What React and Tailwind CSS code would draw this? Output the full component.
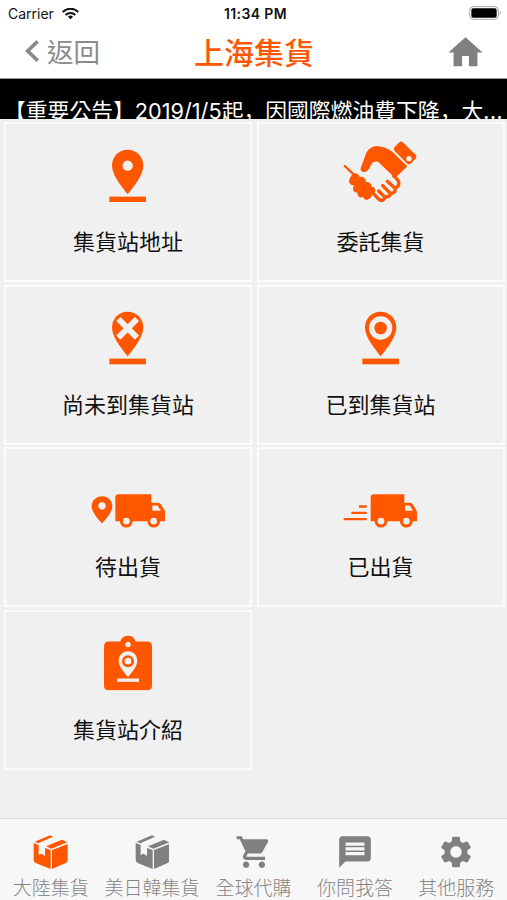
import { MdHome, MdMessage, MdSettings, MdShoppingCart } from "react-icons/md";

const ORANGE = "#ff5600";
const PAPER = "#f0f0f0";

function WifiIcon() {
  return (
    <svg viewBox="0 0 51 36" className="w-[17px] h-3 shrink-0" fill="none" stroke="#111" strokeWidth="6">
      <path d="M2 12C15 -1 36 -1 49 12" />
      <path d="M11 21C19 13 32 13 40 21" />
      <path d="M18 26C22 21.500 29 21.500 33 26L25.500 34Z" fill="#111" stroke="none" />
    </svg>
  );
}

function BatteryIcon() {
  return (
    <svg viewBox="0 0 96 42" className="w-8 h-3.5" fill="none">
      <rect x="2" y="2" width="86" height="38" rx="10" stroke="#aaa" strokeWidth="3" />
      <rect x="7" y="7" width="76" height="28" rx="5" fill="#000" />
      <path d="M92 15C96 17 96 25 92 27Z" fill="#999" />
    </svg>
  );
}

function PinIcon({ kind }) {
  return (
    <svg viewBox="0 0 112 160" className="w-[37.300px] h-[53.300px]">
      <path d="M56 2C29 2 9 23 9 49C9 76 31 105 56 136C81 105 103 76 103 49C103 23 83 2 56 2Z" fill={ORANGE} />
      <rect x="1" y="143" width="110" height="17" fill={ORANGE} />
      {kind === "dot" && <circle cx="56" cy="50" r="15.500" fill={PAPER} />}
      {kind === "cross" && <path d="M28 24L84 80M84 24L28 80" stroke={PAPER} strokeWidth="18" />}
      {kind === "ring" && (
        <>
          <circle cx="56" cy="51" r="35" fill={PAPER} />
          <circle cx="56" cy="51" r="19" fill={ORANGE} />
        </>
      )}
    </svg>
  );
}

function HandshakeIcon() {
  return (
    <svg viewBox="100 30 225 190" className="w-[75px] h-[63.300px] translate-y-px" fill={ORANGE}>
      <path d="M105 108L136 137" stroke={ORANGE} strokeWidth="7" strokeLinecap="round" />
      <path d="M270 36Q276 33 281 38L318 74Q323 80 319 85L305 100Q299 106 293 101L255 63Q250 58 254 52Z" />
      <path d="M153 115L170 68Q180 50 200 48Q225 49 248 65L293 109L259 142L246 134L206 96Q196 92 187 100L179 115Q173 127 162 126Q151 124 153 115Z" />
      <path
        d="M129 135Q138 128 146 137L149 145Q158 139 165 148L168 159Q178 155 183 165L184 173Q193 171 195 180Q196 187 190 191L178 205Q169 211 164 204L161 198Q150 205 146 194L144 185Q133 188 132 177L134 163Q121 165 120 154Q120 146 129 135Z"
        stroke={ORANGE}
        strokeWidth="4"
      />
      <path
        d="M188 188L207 207Q216 216 224 207L228 200Q238 203 244 190Q258 190 257 174Q270 168 267 155Q265 149 252 138M207 183L226 202M219 167L242 190M233 154L256 175"
        fill="none"
        stroke={ORANGE}
        strokeWidth="10"
        strokeLinecap="round"
        strokeLinejoin="round"
      />
      <circle cx="298" cy="86" r="8" fill={PAPER} />
    </svg>
  );
}

function WaitingTruckIcon() {
  return (
    <svg viewBox="92 70 224 104" className="w-[74.700px] h-[34.700px] translate-y-[1.500px]">
      <path d="M125 78C107 78 94 91 94 108C94 125 110 143 125 160C140 143 156 125 156 108C156 91 143 78 125 78Z" fill={ORANGE} />
      <circle cx="125" cy="107" r="11" fill={PAPER} />
      <path d="M175 72H273V98H293Q299 98 302 103L315 124V153H165V82Q165 72 175 72Z" fill={ORANGE} />
      <circle cx="198" cy="153" r="19" fill={ORANGE} />
      <circle cx="280" cy="153" r="19" fill={ORANGE} />
      <circle cx="198" cy="153" r="10" fill={PAPER} />
      <circle cx="280" cy="153" r="10" fill={PAPER} />
      <path d="M276 106H291L302 122H276Z" fill={PAPER} />
    </svg>
  );
}

function MovingTruckIcon() {
  return (
    <svg viewBox="100 70 224 104" className="w-[74.700px] h-[34.700px] translate-y-[1.500px]">
      <path d="M148 109H171M125 128H171M102 147H171" stroke={ORANGE} strokeWidth="7" />
      <path d="M194 72H284V98H301Q307 98 310 103L322 124V153H183V82Q183 72 194 72Z" fill={ORANGE} />
      <circle cx="214" cy="153" r="19" fill={ORANGE} />
      <circle cx="290" cy="153" r="19" fill={ORANGE} />
      <circle cx="214" cy="153" r="10" fill={PAPER} />
      <circle cx="290" cy="153" r="10" fill={PAPER} />
      <path d="M286 106H300L310 122H286Z" fill={PAPER} />
    </svg>
  );
}

function ClipboardIcon() {
  return (
    <svg viewBox="132 47 144 164" className="w-12 h-[54.700px] translate-y-[0.500px]">
      <path
        d="M146 65H181C184 54 193 48 204 48C215 48 224 54 227 65H262Q276 65 276 79V197Q276 211 262 211H146Q132 211 132 197V79Q132 65 146 65Z"
        fill={ORANGE}
      />
      <circle cx="204" cy="74" r="8" fill={PAPER} />
      <path d="M204 94C187 94 176 107 176 123C176 139 190 155 204 172C218 155 232 139 232 123C232 107 221 94 204 94Z" fill={PAPER} />
      <circle cx="204" cy="124" r="18" fill={ORANGE} />
      <circle cx="204" cy="124" r="10" fill={PAPER} />
      <rect x="171" y="176" width="66" height="10" fill={PAPER} />
    </svg>
  );
}

function BoxIcon() {
  return (
    <svg viewBox="100 74 104 104" className="w-[34.700px] h-[34.700px]" fill="currentColor">
      <path d="M102 98L117 104V134L126 130L136 137V113L153 119V176L108 158Q102 155 102 149Z" />
      <path d="M157 119L204 101V148Q204 155 198 158L157 176Z" />
      <path d="M105 94L151 75L160 79L116 99Z" />
      <path d="M139 108L187 88L203 96L155 115Z" />
    </svg>
  );
}

const CARDS = [
  { label: "集貨站地址", icon: <PinIcon kind="dot" /> },
  { label: "委託集貨", icon: <HandshakeIcon /> },
  { label: "尚未到集貨站", icon: <PinIcon kind="cross" /> },
  { label: "已到集貨站", icon: <PinIcon kind="ring" /> },
  { label: "待出貨", icon: <WaitingTruckIcon /> },
  { label: "已出貨", icon: <MovingTruckIcon /> },
  { label: "集貨站介紹", icon: <ClipboardIcon /> },
];

const TABS = [
  { label: "大陸集貨", icon: <BoxIcon />, active: true },
  { label: "美日韓集貨", icon: <BoxIcon /> },
  { label: "全球代購", icon: <MdShoppingCart size={38} className="ml-0.5" /> },
  { label: "你問我答", icon: <MdMessage size={38} /> },
  { label: "其他服務", icon: <MdSettings size={38} /> },
];

function StatusBar() {
  return (
    <div className="h-[26px] pl-2 pr-1.5 grid grid-cols-3 items-center font-['Inter',sans-serif] text-[14px] text-[#111]">
      <div className="pt-px flex items-center gap-2">
        <span>Carrier</span>
        <WifiIcon />
      </div>
      <div className="pl-0.5 pt-px text-center font-semibold text-[14px] tracking-[0.4px] whitespace-nowrap">11:34 PM</div>
      <div className="flex justify-end">
        <BatteryIcon />
      </div>
    </div>
  );
}

function NavBar() {
  return (
    <header className="h-[53px] border-b border-[#999] grid grid-cols-3 items-center pl-[25px] pr-[21px]">
      <button className="pb-0.5 flex items-center gap-2 text-[26.500px] leading-none text-[#8a8a8a]">
        <svg viewBox="0 0 42 66" className="w-3.5 h-[22px]" fill="none" stroke="currentColor" strokeWidth="11">
          <path d="M38 4L8 33L38 62" />
        </svg>
        返回
      </button>
      <h1 className="pb-[3px] pr-[3px] text-center text-[30px] font-medium leading-none whitespace-nowrap text-[#ff5600]">上海集貨</h1>
      <div className="flex justify-end text-[#808080]">
        <MdHome size={41} />
      </div>
    </header>
  );
}

export default function App() {
  return (
    <div className="w-[507px] h-[900px] flex flex-col overflow-hidden bg-white font-['Noto_Sans_CJK_TC',sans-serif]">
      <StatusBar />
      <NavBar />
      <div className="h-10 shrink-0 bg-black text-white overflow-hidden pl-1 pt-4 text-[21.800px] leading-[30px] whitespace-nowrap">
        【重要公告】<span className="font-['Inter',sans-serif] text-[21.700px]">2019/1/5</span>起
        <span className="font-['Noto_Sans_CJK_SC',sans-serif]">，</span>因國際燃油費下降
        <span className="font-['Noto_Sans_CJK_SC',sans-serif]">，</span>大<span className="tracking-[0.6px]">...</span>
      </div>
      <main className="flex-1 bg-[#f0f0f0] pl-1 pr-[2.500px] pt-[3px]">
        <div className="grid grid-cols-2 gap-x-[4.500px] gap-y-[2.500px]">
          {CARDS.map((card) => (
            <div key={card.label} className="h-[160px] border-2 border-[#fcfcfc] flex flex-col items-center">
              <div className="h-[78px] flex items-end justify-center">{card.icon}</div>
              <div className="mt-6 text-[22px] leading-7 text-[#111]">{card.label}</div>
            </div>
          ))}
        </div>
      </main>
      <nav className="h-[82px] shrink-0 bg-[#f7f7f7] border-t border-[#dcdcdc] grid grid-cols-5">
        {TABS.map((tab) => (
          <div key={tab.label} className="flex flex-col items-center pt-3.5">
            <div className={`h-[38px] flex items-center ${tab.active ? "text-[#ff5600]" : "text-[#808080]"}`}>{tab.icon}</div>
            <div className="mt-0.5 text-[19px] leading-7 font-light whitespace-nowrap text-[#858585]">{tab.label}</div>
          </div>
        ))}
      </nav>
    </div>
  );
}
